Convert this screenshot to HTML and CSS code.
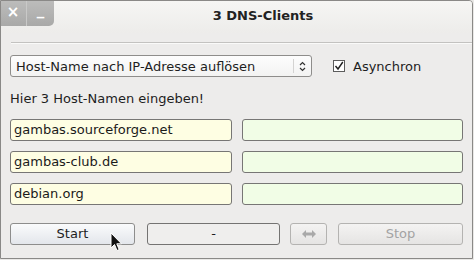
FILE: index.html
```html
<!DOCTYPE html>
<html lang="de">
<head>
    <meta charset="UTF-8">
    <title>3 DNS-Clients</title>
    <link rel="stylesheet" href="styles.css">
</head>
<body>

<div class="window">
    <!-- Titelleiste -->
    <div class="titlebar">
        <div class="wm-buttons">
            <span class="wm-btn">&#215;</span>
            <span class="wm-btn min">_</span>
        </div>
        <div class="title">3 DNS-Clients</div>
    </div>

    <div class="content">
        <div class="separator"></div>

        <div class="top-row">
            <div class="combo">
                <span class="combo-text">Host-Name nach IP-Adresse auflösen</span>
                <span class="combo-arrows">
                    <svg width="7" height="11" viewBox="0 0 7 11">
                        <path d="M1 4 L3.5 1.5 L6 4 M1 7 L3.5 9.5 L6 7" fill="none" stroke="#333" stroke-width="1.2"/>
                    </svg>
                </span>
            </div>
            <label class="check">
                <span class="check-box">
                    <svg width="10" height="10" viewBox="0 0 10 10">
                        <path d="M1.5 5 L4 8 L8.8 1" fill="none" stroke="#222" stroke-width="1.4"/>
                    </svg>
                </span>
                Asynchron
            </label>
        </div>

        <div class="hint">Hier 3 Host-Namen eingeben!</div>

        <!-- Eingabe und Ergebnis -->
        <div class="hosts">
            <div class="field host">gambas.sourceforge.net</div>
            <div class="field result"></div>
            <div class="field host">gambas-club.de</div>
            <div class="field result"></div>
            <div class="field host">debian.org</div>
            <div class="field result"></div>
        </div>

        <div class="buttons">
            <div class="btn start">Start</div>
            <div class="status">-</div>
            <div class="btn swap disabled">
                <svg width="14" height="8" viewBox="0 0 14 8">
                    <path d="M0 4 L4 0 L4 2.5 L10 2.5 L10 0 L14 4 L10 8 L10 5.5 L4 5.5 L4 8 Z" fill="#a9a9a9"/>
                </svg>
            </div>
            <div class="btn stop disabled">Stop</div>
        </div>
    </div>

    <svg class="cursor" width="13" height="20" viewBox="0 0 13 20">
        <path d="M1 1 L1 16 L4.5 12.5 L7 18.5 L9.2 17.6 L6.8 11.8 L11.5 11.8 Z" fill="#111" stroke="#fff" stroke-width="1"/>
    </svg>
</div>

</body>
</html>
```

FILE: styles.css
```css
body {
    margin: 0;
    padding: 0;
    background-color: #e9e8e6;
    font-family: "DejaVu Sans", sans-serif;
    font-size: 13px;
    color: #2f2f2f;
}

.window {
    position: relative;
    width: 473px;
    height: 259px;
    box-sizing: border-box;
    border: 1px solid #8a8987;
    border-top-right-radius: 4px;
    background-color: #edeceb;
    overflow: hidden;
}

.titlebar {
    display: flex;
    height: 33px;
    margin-top: -1px;
    margin-left: -1px;
    background: linear-gradient(#f6f6f4, #edecea);
}

.wm-buttons {
    display: flex;
    height: 26px;
    border-bottom-right-radius: 5px;
    overflow: hidden;
}

.wm-btn {
    width: 26px;
    height: 26px;
    line-height: 25px;
    text-align: center;
    background: linear-gradient(#bdbdbc, #a9a9a8);
    color: #fff;
    font-weight: bold;
    font-size: 15px;
}

.wm-btn.min {
    width: 27px;
    border-left: 1px solid #c9c9c8;
    line-height: 20px;
}

.title {
    flex: 1;
    text-align: center;
    padding-top: 8px;
    font-weight: bold;
    color: #222;
}

.content {
    padding: 9px 8px 0 9px;
}

.separator {
    margin-left: 1px;
    margin-right: -8px;
    height: 1px;
    background-color: #c3c2c0;
    border-bottom: 1px solid #fafaf9;
}

.top-row {
    display: flex;
    align-items: center;
    margin-top: 11px;
}

.combo {
    display: flex;
    align-items: center;
    width: 302px;
    height: 22px;
    box-sizing: border-box;
    border: 1px solid #8e8d8b;
    border-radius: 3px;
    background: linear-gradient(#fdfdfd, #f3f3f2);
}

.combo-text {
    flex: 1;
    padding-left: 5px;
    color: #1e1e1e;
}

.combo-arrows {
    display: flex;
    align-items: center;
    justify-content: center;
    width: 17px;
    height: 14px;
    border-left: 1px solid #d4d3d2;
}

.check {
    display: flex;
    align-items: center;
    margin-left: 21px;
    color: #1e1e1e;
}

.check-box {
    display: flex;
    align-items: center;
    justify-content: center;
    width: 12px;
    height: 12px;
    box-sizing: border-box;
    border: 1px solid #5c5c5c;
    background-color: #fff;
    margin-right: 8px;
}

.hint {
    margin-top: 14px;
    color: #1e1e1e;
}

.hosts {
    display: grid;
    grid-template-columns: 222px 221px;
    column-gap: 10px;
    row-gap: 10px;
    margin-top: 13px;
}

.field {
    height: 22px;
    box-sizing: border-box;
    border: 1px solid #777675;
    border-radius: 3px;
    padding-left: 3px;
    line-height: 20px;
    color: #1a1a1a;
}

.field.host {
    background-color: #fefee3;
}

.field.result {
    background-color: #f1fde6;
}

.buttons {
    display: flex;
    margin-top: 18px;
}

.btn,
.status {
    height: 22px;
    box-sizing: border-box;
    border-radius: 3px;
    text-align: center;
    line-height: 20px;
}

.btn {
    border: 1px solid #8d8d8c;
    background: linear-gradient(#fafbfc, #e3e6eb);
    color: #1e1e1e;
}

.btn.disabled {
    border-color: #b4b3b1;
    background: linear-gradient(#f4f3f2, #e5e4e3);
    color: #a3a3a3;
}

.start {
    width: 125px;
}

.status {
    width: 133px;
    margin-left: 12px;
    border: 1px solid #747372;
    background-color: #efeeed;
    color: #1e1e1e;
}

.swap {
    width: 37px;
    margin-left: 10px;
    display: flex;
    align-items: center;
    justify-content: center;
}

.stop {
    width: 125px;
    margin-left: 11px;
}

.cursor {
    position: absolute;
    left: 109px;
    top: 231px;
}
```
